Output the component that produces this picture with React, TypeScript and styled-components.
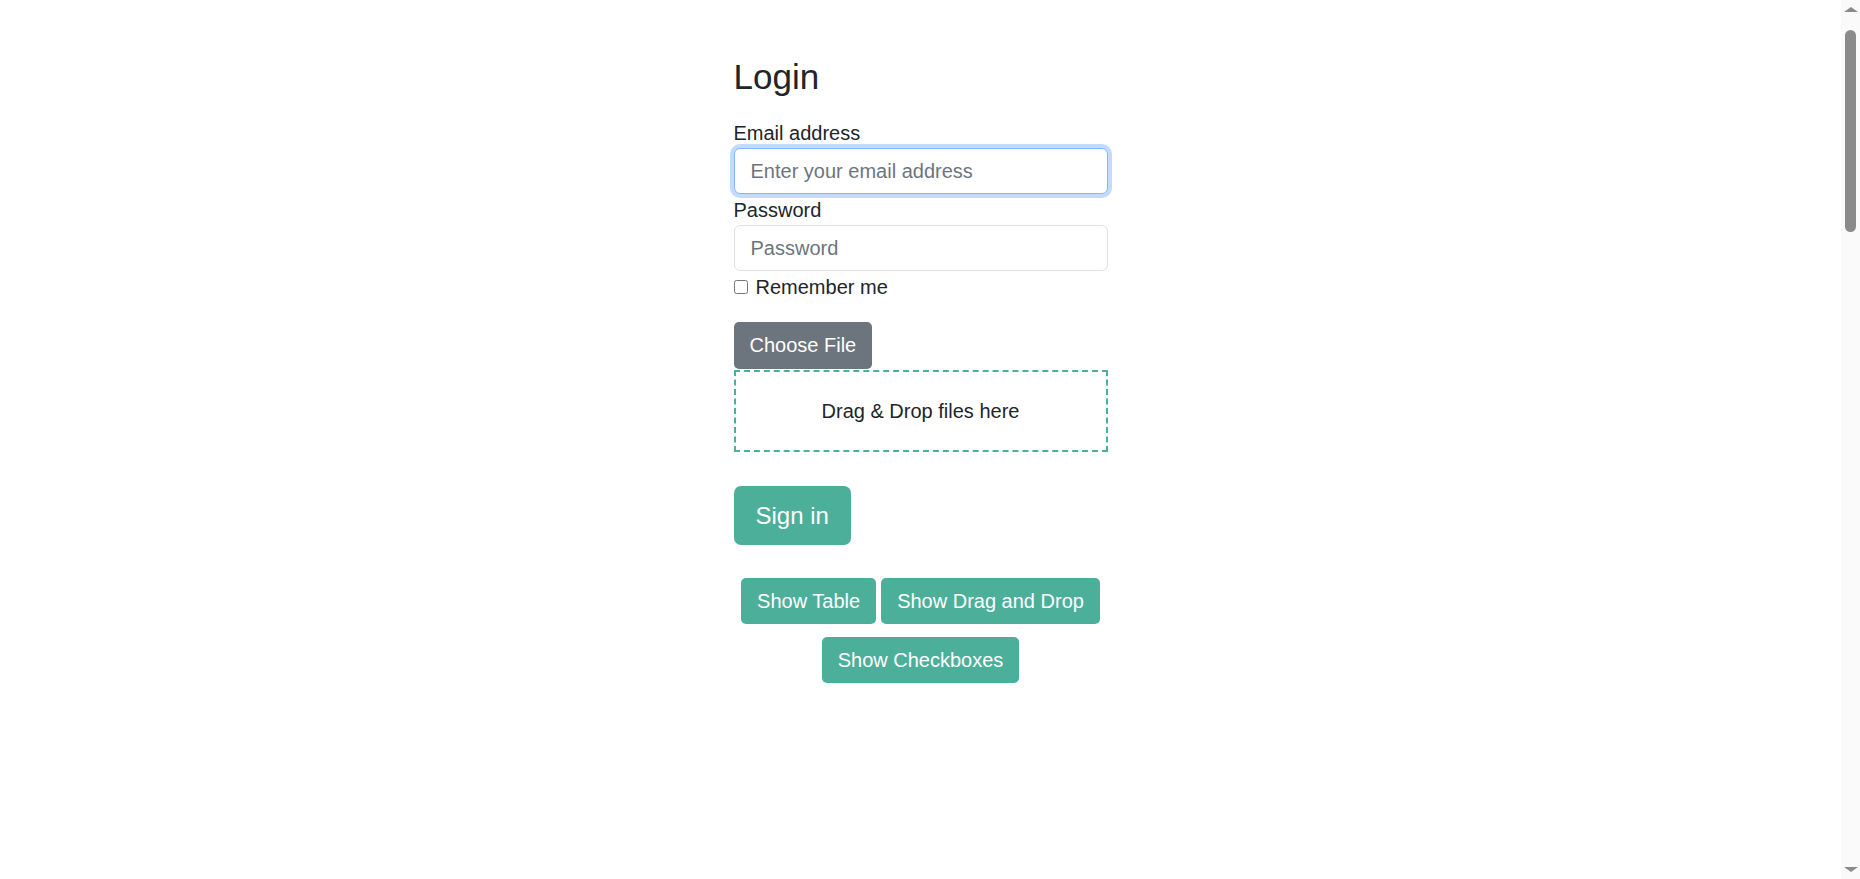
import React from 'react'
import styled, { createGlobalStyle } from 'styled-components'

const GlobalStyle = createGlobalStyle`
  * {
    box-sizing: border-box;
  }
  html {
    scrollbar-width: none;
  }
  body {
    margin: 0;
    font-family: "Liberation Sans", Arial, sans-serif;
    font-size: 20px;
    line-height: 1.5;
    color: #212529;
    background-color: #fff;
  }
`

const Page = styled.main`
  min-height: 3680px;
  padding: 56px 19px 0 0;
`

const LoginForm = styled.form`
  width: 374px;
  margin: 0 auto;
  display: flex;
  flex-direction: column;
`

const Title = styled.h3`
  margin: 0 0 20px;
  font-size: 35px;
  font-weight: 400;
  line-height: 42px;
`

const Field = styled.div`
  display: flex;
  flex-direction: column;
  margin-bottom: 1px;
`

const Label = styled.label`
  line-height: 30px;
`

const Input = styled.input<{ $focused?: boolean }>`
  height: 46px;
  padding: 0 16px;
  font-family: inherit;
  font-size: 20px;
  color: #212529;
  border: 1px solid ${({ $focused }) => ($focused ? '#86b7fe' : '#dee2e6')};
  border-radius: 6px;
  outline: none;
  box-shadow: ${({ $focused }) =>
    $focused ? '0 0 0 4px rgba(13, 110, 253, 0.25)' : 'none'};

  &::placeholder {
    color: #6c757d;
  }
`

const CheckRow = styled.label`
  display: flex;
  align-items: center;
  gap: 8px;
  line-height: 30px;
  margin-bottom: 20px;

  & > input {
    width: 14px;
    height: 14px;
    margin: 0;
  }
`

const Button = styled.button<{ $variant?: 'gray' | 'teal'; $large?: boolean }>`
  align-self: flex-start;
  height: ${({ $large }) => ($large ? '59px' : '47px')};
  padding: ${({ $large }) => ($large ? '0 22px' : '0 16px')};
  font-family: inherit;
  font-size: ${({ $large }) => ($large ? '24px' : '20px')};
  color: #fff;
  background-color: ${({ $variant }) => ($variant === 'gray' ? '#6c757d' : '#4caf9a')};
  border: none;
  border-radius: ${({ $large }) => ($large ? '7px' : '5px')};
  cursor: pointer;
`

const DropZone = styled.div`
  height: 82px;
  margin: 1px 0 34px;
  display: flex;
  align-items: center;
  justify-content: center;
  border: 2px dashed #4caf9a;
  color: #212529;
`

const ToggleBar = styled.div`
  margin-top: 33px;
  display: flex;
  flex-wrap: wrap;
  justify-content: center;
  column-gap: 5px;
  row-gap: 13px;

  & > button {
    align-self: auto;
    height: 46px;
  }
`

// window scrollbar as it appears in the screenshot
const ScrollTrack = styled.div`
  position: fixed;
  top: 0;
  right: 0;
  bottom: 0;
  width: 19px;
  display: flex;
  flex-direction: column;
  align-items: center;
  background-color: #fafafa;
`

const Arrow = styled.div<{ $down?: boolean }>`
  width: 0;
  height: 0;
  margin: ${({ $down }) => ($down ? 'auto 0 7px' : '7px 0 0')};
  border-left: 7px solid transparent;
  border-right: 7px solid transparent;
  ${({ $down }) =>
    $down ? 'border-top: 5px solid #8a8a8a;' : 'border-bottom: 5px solid #8a8a8a;'}
`

const Thumb = styled.div`
  width: 11px;
  height: 202px;
  margin-top: 18px;
  border-radius: 6px;
  background-color: #8a8a8a;
`

export default function App() {
  return (
    <>
      <GlobalStyle />
      <Page>
        <LoginForm onSubmit={e => e.preventDefault()}>
          <Title>Login</Title>
          <Field>
            <Label htmlFor="email">Email address</Label>
            <Input id="email" type="email" placeholder="Enter your email address" $focused />
          </Field>
          <Field>
            <Label htmlFor="password">Password</Label>
            <Input id="password" type="password" placeholder="Password" />
          </Field>
          <CheckRow>
            <input type="checkbox" />
            Remember me
          </CheckRow>
          <Button type="button" $variant="gray">Choose File</Button>
          <DropZone>Drag &amp; Drop files here</DropZone>
          <Button type="submit" $large>Sign in</Button>
          <ToggleBar>
            <Button type="button">Show Table</Button>
            <Button type="button">Show Drag and Drop</Button>
            <Button type="button">Show Checkboxes</Button>
          </ToggleBar>
        </LoginForm>
      </Page>
      <ScrollTrack>
        <Arrow />
        <Thumb />
        <Arrow $down />
      </ScrollTrack>
    </>
  )
}
